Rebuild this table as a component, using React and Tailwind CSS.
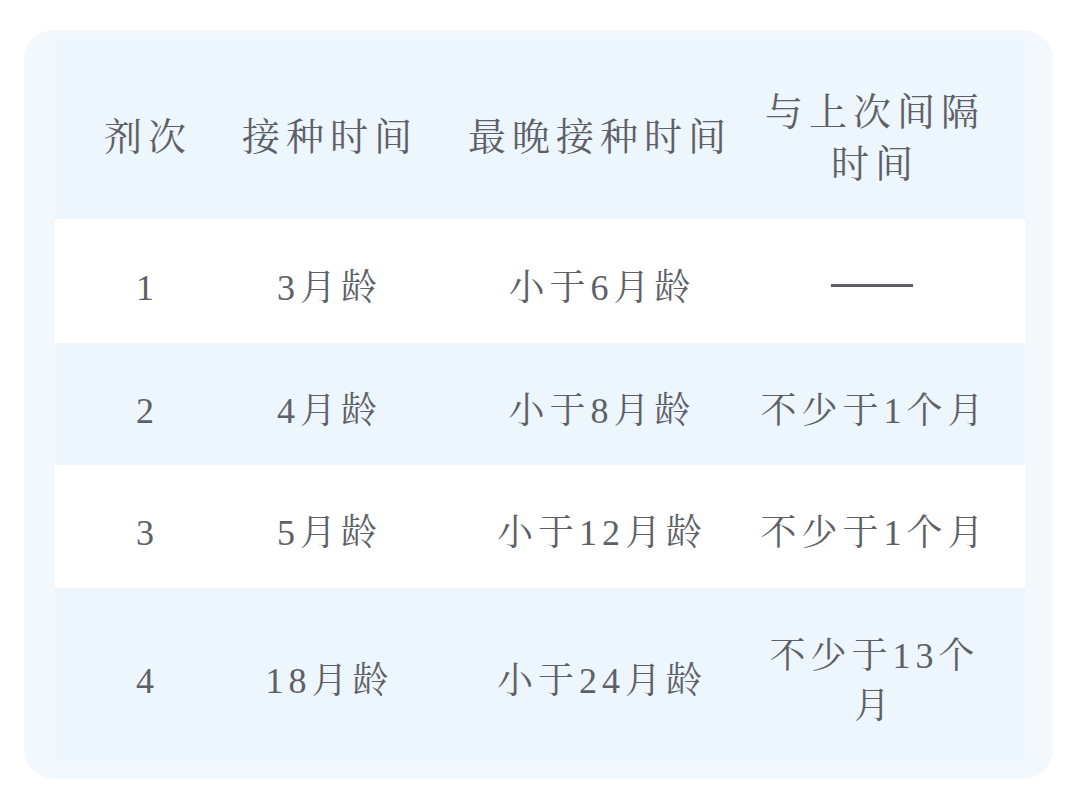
import React from "react";

const font = {
  fontFamily:
    '"Liberation Serif", "Noto Serif CJK SC", "Noto Sans CJK SC", serif',
};

const rows = [
  { n: "1", a: "3月龄", b: "小于6月龄", c: "dash", bg: "bg-white", h: "h-[124px]" },
  { n: "2", a: "4月龄", b: "小于8月龄", c: ["不少于1个月"], bg: "bg-transparent", h: "h-[122px]" },
  { n: "3", a: "5月龄", b: "小于12月龄", c: ["不少于1个月"], bg: "bg-white", h: "h-[123px]" },
  { n: "4", a: "18月龄", b: "小于24月龄", c: ["不少于13个", "月"], bg: "bg-transparent", h: "h-[172px]" },
];

function Cell4({ c }) {
  if (c === "dash") {
    return <div className="w-[82px] h-[3px] bg-[#5d6167] mt-[-4px]" />;
  }
  return (
    <div className="flex flex-col items-center leading-[50px]">
      {c.map((l, i) => (
        <span key={i} className="whitespace-nowrap pl-[5px]">{l}</span>
      ))}
    </div>
  );
}

export default function App() {
  return (
    <div className="w-[1067px] h-[806px] bg-white pt-[30px] pl-[24px]" style={font}>
      <div className="w-[1029px] h-[749px] rounded-[30px] bg-[#f3f8fd] px-[31px] pt-[10px]">
        <div className="w-[970px] h-[720px] bg-[#edf5fd] text-[#5d6167]">
          {/* header */}
          <div className="flex h-[179px] items-center text-[38px] tracking-[6px] pt-[16px]">
            <div className="w-[180px] flex justify-center pl-[6px]">剂次</div>
            <div className="w-[184px] flex justify-center pl-[6px]">接种时间</div>
            <div className="w-[340px] flex justify-center pl-[22px]">最晚接种时间</div>
            <div className="w-[226px] flex flex-col items-center leading-[52px] pl-[6px]">
              <span className="whitespace-nowrap">与上次间隔</span>
              <span className="whitespace-nowrap">时间</span>
            </div>
          </div>
          {rows.map((r) => (
            <div
              key={r.n}
              className={`flex items-center ${r.h} ${r.bg} text-[36px] tracking-[5px] pt-[13px]`}
            >
              <div className="w-[180px] flex justify-center pl-[5px]">{r.n}</div>
              <div className="w-[184px] flex justify-center pl-[5px] whitespace-nowrap">{r.a}</div>
              <div className="w-[340px] flex justify-center pl-[26px] whitespace-nowrap">{r.b}</div>
              <div className="w-[226px] flex justify-center">
                <Cell4 c={r.c} />
              </div>
            </div>
          ))}
        </div>
      </div>
    </div>
  );
}
